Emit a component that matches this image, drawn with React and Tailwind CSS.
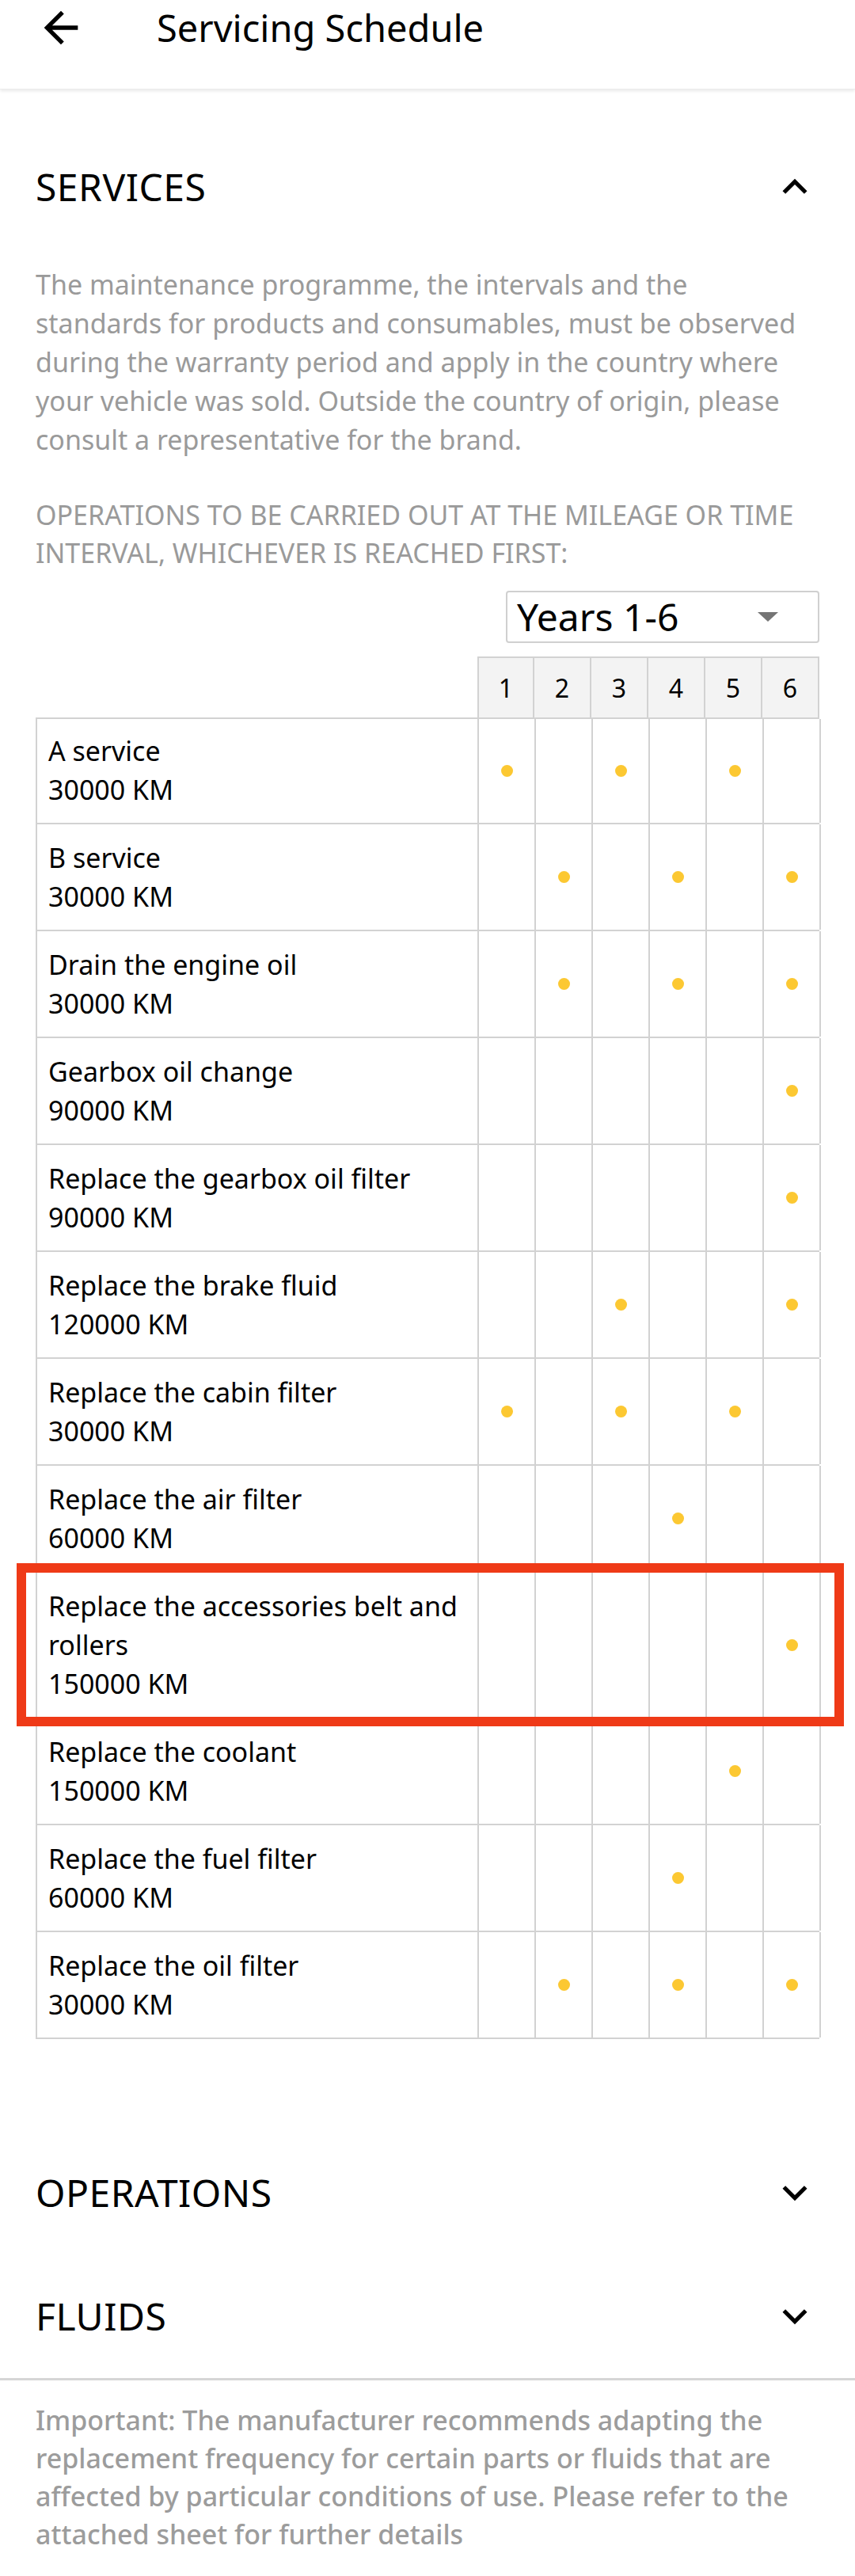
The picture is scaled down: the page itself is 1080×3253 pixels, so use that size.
import React from 'react'

const rows = [
  { name: 'A service', km: '30000 KM', dots: [1, 3, 5] },
  { name: 'B service', km: '30000 KM', dots: [2, 4, 6] },
  { name: 'Drain the engine oil', km: '30000 KM', dots: [2, 4, 6] },
  { name: 'Gearbox oil change', km: '90000 KM', dots: [6] },
  { name: 'Replace the gearbox oil filter', km: '90000 KM', dots: [6] },
  { name: 'Replace the brake fluid', km: '120000 KM', dots: [3, 6] },
  { name: 'Replace the cabin filter', km: '30000 KM', dots: [1, 3, 5] },
  { name: 'Replace the air filter', km: '60000 KM', dots: [4] },
  { name: 'Replace the accessories belt and rollers', km: '150000 KM', dots: [6], marked: true },
  { name: 'Replace the coolant', km: '150000 KM', dots: [5] },
  { name: 'Replace the fuel filter', km: '60000 KM', dots: [4] },
  { name: 'Replace the oil filter', km: '30000 KM', dots: [2, 4, 6] },
]

const years = [1, 2, 3, 4, 5, 6]

const Chevron = ({ up }) => (
  <svg viewBox="0 0 24 24" className="w-[62px] h-[62px] shrink-0" fill="#000">
    { up
      ? <path d="M12 8l-6 6 1.41 1.41L12 10.83l4.59 4.58L18 14z" />
      : <path d="M16.59 8.59L12 13.17 7.41 8.59 6 10l6 6 6-6z" /> }
  </svg>
)

const SectionHeader = ({ title, up }) => (
  <div className="flex items-center justify-between h-[156px]">
    <h2 className="text-[48px] leading-none text-black tracking-[0.5px]">{ title }</h2>
    <Chevron up={ up } />
  </div>
)

const ScheduleRow = ({ row, first }) => (
  <div className={ `relative grid grid-cols-[558px_repeat(6,72px)] border-l-2 border-b-2 border-[#d2d2d2] ${ first ? 'border-t-2' : '' }` }>
    <div className={ `border-r-2 border-[#d2d2d2] pl-[14px] pr-2 pb-[17px] text-[34px] leading-[49px] text-black ${ first ? 'pt-[16px]' : 'pt-[18px]' }` }>
      <div>{ row.name }</div>
      <div>{ row.km }</div>
    </div>
    { years.map ( y => (
      <div key={ y } className="border-r-2 border-[#d2d2d2] flex items-center justify-center">
        { row.dots.includes ( y ) && <span className="block w-[15px] h-[15px] rounded-full bg-[#fcc832]" /> }
      </div>
    ) ) }
    { row.marked && (
      <div className="absolute z-10 -left-[26px] -top-[12px] w-[1045px] h-[206px] border-[12px] border-[#ef3a17] pointer-events-none" />
    ) }
  </div>
)

export default function App () {
  return (
    <div className="w-[1080px] min-h-[3253px] bg-white font-['Noto_Sans',sans-serif] text-black">
      {/* top bar */}
      <header className="h-[113px] flex items-start pt-[3px] bg-white shadow-[0_2px_4px_rgba(0,0,0,0.09)] border-b border-[#ececec]">
        <svg viewBox="0 0 24 24" className="w-[64px] h-[64px] ml-[45px]" fill="#000">
          <path d="M20 11H7.83l5.59-5.59L12 4l-8 8 8 8 1.41-1.41L7.83 13H20v-2z" />
        </svg>
        <h1 className="ml-[89px] text-[47px] leading-[64px] text-black">Servicing Schedule</h1>
      </header>

      <main className="px-[45px] pt-[45px]">
        <SectionHeader title="SERVICES" up />

        <p className="mt-[21px] text-[34px] leading-[49px] text-[#9a9a9a]">
          The maintenance programme, the intervals and the standards for products and consumables, must be observed during the warranty period and apply in the country where your vehicle was sold. Outside the country of origin, please consult a representative for the brand.
        </p>

        <p className="mt-[46px] text-[34px] leading-[48px] text-[#9a9a9a]">
          OPERATIONS TO BE CARRIED OUT AT THE MILEAGE OR TIME INTERVAL, WHICHEVER IS REACHED FIRST:
        </p>

        <div className="flex justify-end mt-[24px]">
          <div className="w-[396px] h-[66px] border-2 border-[#d0d0d0] rounded-[4px] flex items-center justify-between pl-[12px] pr-[50px]">
            <span className="text-[48px] leading-none text-black">Years 1-6</span>
            <span className="w-0 h-0 border-l-[13px] border-r-[13px] border-t-[12px] border-l-transparent border-r-transparent border-t-[#757575]" />
          </div>
        </div>

        {/* schedule table */}
        <div className="mt-[17px] w-[990px]">
          <div className="grid grid-cols-[558px_repeat(6,72px)] h-[77px]">
            <div />
            { years.map ( y => (
              <div key={ y } className={ `bg-[#f3f3f3] border-t-2 border-r-2 border-[#d2d2d2] flex items-center justify-center text-[32px] text-black ${ y === 1 ? 'border-l-2' : '' }` }>
                { y }
              </div>
            ) ) }
          </div>
          { rows.map ( ( row, i ) => <ScheduleRow key={ row.name } row={ row } first={ i === 0 } /> ) }
        </div>

        <div className="mt-[116px]">
          <SectionHeader title="OPERATIONS" />
          <SectionHeader title="FLUIDS" />
        </div>
      </main>

      <div className="border-t-[3px] border-[#d6d6d6]" />

      <p className="px-[45px] pt-[26px] pb-10 text-[34px] leading-[48px] font-medium text-[#9c9c9c]">
        Important: The manufacturer recommends adapting the replacement frequency for certain parts or fluids that are affected by particular conditions of use. Please refer to the attached sheet for further details
      </p>
    </div>
  )
}
